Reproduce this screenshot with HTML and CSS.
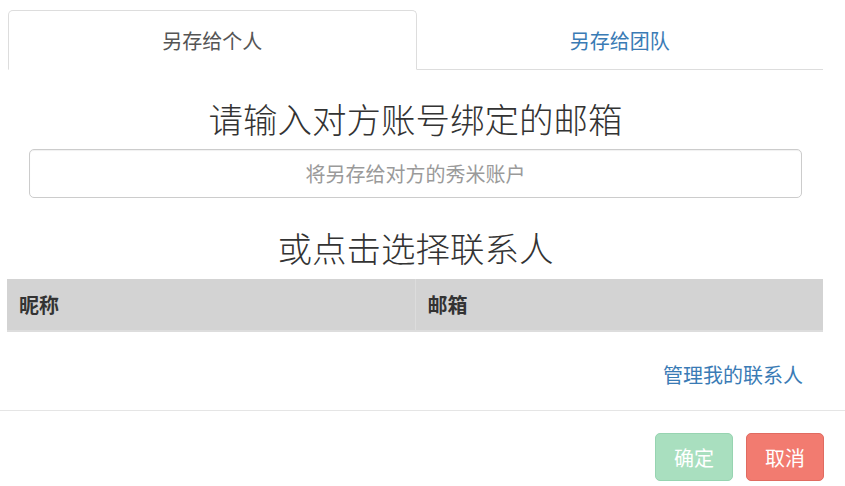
FILE: index.html
```html
<!DOCTYPE html>
<html lang="zh-CN">
<head>
<meta charset="utf-8">
<title>另存为</title>
<link rel="stylesheet" href="styles.css">
</head>
<body>
<div class="modal">
  <div class="modal-body">
    <div class="tabs">
      <div class="tab active">另存给个人</div>
      <div class="tab"><a href="#" class="tab-link">另存给团队</a></div>
    </div>
    <h2 class="title title-first">请输入对方账号绑定的邮箱</h2>
    <div class="field">
      <input class="input" type="text" placeholder="将另存给对方的秀米账户">
    </div>
    <h2 class="title title-second">或点击选择联系人</h2>
    <table class="contacts">
      <thead>
        <tr><th>昵称</th><th>邮箱</th></tr>
      </thead>
      <tbody></tbody>
    </table>
    <div class="manage"><a href="#" class="manage-link">管理我的联系人</a></div>
  </div>
  <div class="modal-footer">
    <button class="btn btn-ok" disabled>确定</button>
    <button class="btn btn-cancel">取消</button>
  </div>
</div>
</body>
</html>
```

FILE: styles.css
```css
html, body {
  margin: 0;
  padding: 0;
  background: #fff;
}

body {
  font-family: "Noto Sans CJK SC", "Noto Sans", "Liberation Sans", sans-serif;
  color: #333;
}

.modal-body {
  padding: 10px 22px 0 8px;
}

.tabs {
  display: flex;
}

.tab {
  flex: 1;
  height: 60px;
  box-sizing: border-box;
  display: flex;
  align-items: center;
  justify-content: center;
  font-size: 20px;
  color: #555;
  border-bottom: 1px solid #ddd;
  border-top: 1px solid transparent;
}

.tab.active {
  border: 1px solid #ddd;
  border-bottom-color: transparent;
  border-radius: 5px 5px 0 0;
}

.tab-link {
  color: #3a7bb5;
  text-decoration: none;
}

.title {
  margin: 0;
  font-size: 34.5px;
  font-weight: 300;
  line-height: 38px;
  text-align: center;
  color: #333;
}

.title-first {
  margin-top: 29px;
}

.title-second {
  margin-top: 30px;
}

.field {
  padding: 0 21px;
  margin-top: 12px;
}

.input {
  display: block;
  width: 100%;
  height: 49px;
  box-sizing: border-box;
  border: 1px solid #ccc;
  border-radius: 5px;
  box-shadow: inset 0 1px 1px rgba(0, 0, 0, 0.06);
  font-family: inherit;
  font-size: 20px;
  text-align: center;
  color: #555;
  outline: none;
}

.input::placeholder {
  color: #9a9a9a;
}

.contacts {
  width: calc(100% + 1px);
  margin: 13px 0 0 -1px;
  border-collapse: collapse;
}

.contacts th {
  width: 50%;
  height: 52px;
  box-sizing: border-box;
  padding: 0 12px;
  background: #d3d3d3;
  border-bottom: 2px solid #ddd;
  text-align: left;
  font-size: 20px;
  font-weight: 700;
  color: #333;
}

.contacts th + th {
  border-left: 1px solid #dcdcdc;
}

.manage {
  margin-top: 29px;
  padding-right: 20px;
  text-align: right;
  line-height: 28px;
  padding-bottom: 20px;
}

.manage-link {
  font-size: 20px;
  color: #3a7bb5;
  text-decoration: none;
}

.modal-footer {
  border-top: 1px solid #e5e5e5;
  padding: 22px 21px 6px 0;
  display: flex;
  justify-content: flex-end;
  gap: 13px;
}

.btn {
  width: 78px;
  height: 48px;
  box-sizing: border-box;
  border-radius: 5px;
  font-family: inherit;
  font-size: 20px;
  color: #fff;
  padding: 0;
}

.btn-ok {
  background: #a9dfbf;
  border: 1px solid #97d4b1;
}

.btn-cancel {
  background: #f27b70;
  border: 1px solid #e06b61;
}
```
